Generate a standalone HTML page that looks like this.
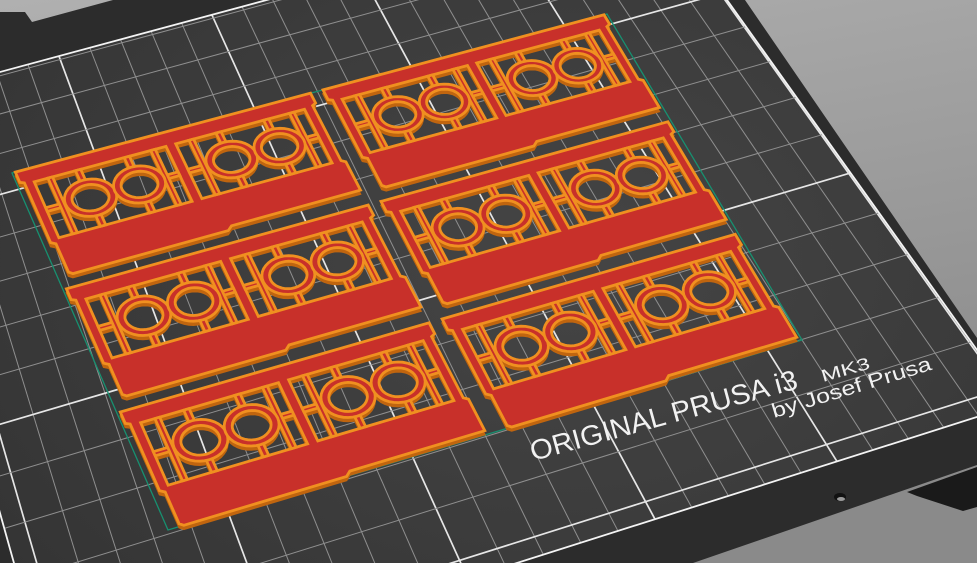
<!DOCTYPE html>
<html><head><meta charset="utf-8"><style>
html,body{margin:0;padding:0;width:977px;height:563px;overflow:hidden;background:#8d8d8d}
svg{display:block}
</style></head><body>
<svg id="s" width="977" height="563" viewBox="0 0 977 563" xmlns="http://www.w3.org/2000/svg">
<defs>
<linearGradient id="bg" x1="0" y1="0" x2="0.3" y2="1"><stop offset="0" stop-color="#b0b0b0"/><stop offset="1" stop-color="#8a8a8a"/></linearGradient>
<radialGradient id="bed" cx="0.6" cy="0.45" r="0.7"><stop offset="0" stop-color="#454545"/><stop offset="1" stop-color="#323232"/></radialGradient>
</defs>
<rect width="977" height="563" fill="url(#bg)"/>
<polygon points="0,12 25,12 32,22 113,0 745,0 977,338 977,465 693,563 0,563" fill="#2c2c2c"/>
<g id="bedg"></g>
<g id="parts"></g>
<polygon points="907,492 977,467 977,507 963,511 917,496" fill="#1a1a1a"/>
<ellipse cx="840" cy="497" rx="6" ry="4" fill="#111"/>
<ellipse cx="841" cy="499" rx="4" ry="2" fill="#9a9a9a"/>
<g fill="#f2f2f2" font-family="Liberation Sans, sans-serif">
<text transform="translate(533,461) rotate(-15.3)" font-size="28" textLength="276" lengthAdjust="spacingAndGlyphs">ORIGINAL PRUSA i3</text>
<text transform="translate(823,382) rotate(-16)" font-size="17" textLength="50" lengthAdjust="spacingAndGlyphs">MK3</text>
<text transform="translate(774,418) rotate(-17)" font-size="20" textLength="166" lengthAdjust="spacingAndGlyphs">by Josef Prusa</text>
</g>
</svg>
<script>
(function(){
var NS="http://www.w3.org/2000/svg";
function solveH(src,dst){var A=[],B=[];for(var i=0;i<4;i++){var x=src[i][0],y=src[i][1],X=dst[i][0],Y=dst[i][1];
A.push([x,y,1,0,0,0,-x*X,-y*X]);B.push(X);A.push([0,0,0,x,y,1,-x*Y,-y*Y]);B.push(Y);}
var n=8;for(var i=0;i<n;i++){var p=i;for(var r=i+1;r<n;r++)if(Math.abs(A[r][i])>Math.abs(A[p][i]))p=r;
var t=A[i];A[i]=A[p];A[p]=t;t=B[i];B[i]=B[p];B[p]=t;
for(var r=0;r<n;r++){if(r===i)continue;var f=A[r][i]/A[i][i];for(var c=i;c<n;c++)A[r][c]-=f*A[i][c];B[r]-=f*B[i];}}
var h=B.map(function(b,i){return b/A[i][i];});return [[h[0],h[1],h[2]],[h[3],h[4],h[5]],[h[6],h[7],1]];}
function ap(M,x,y){var w=M[2][0]*x+M[2][1]*y+M[2][2];return[(M[0][0]*x+M[0][1]*y+M[0][2])/w,(M[1][0]*x+M[1][1]*y+M[1][2])/w];}
function inv3(m){var a=m[0][0],b=m[0][1],c=m[0][2],d=m[1][0],e=m[1][1],f=m[1][2],g=m[2][0],h=m[2][1],i=m[2][2];
var A=e*i-f*h,B=-(d*i-f*g),C=d*h-e*g,det=a*A+b*B+c*C;
return [[A/det,-(b*i-c*h)/det,(b*f-c*e)/det],[B/det,(a*i-c*g)/det,-(a*f-c*d)/det],[C/det,-(a*h-b*g)/det,(a*e-b*d)/det]];}
function isect(p1,p2,p3,p4){var x1=p1[0],y1=p1[1],x2=p2[0],y2=p2[1],x3=p3[0],y3=p3[1],x4=p4[0],y4=p4[1];
var d=(x1-x2)*(y3-y4)-(y1-y2)*(x3-x4);var t=((x1-x3)*(y3-y4)-(y1-y3)*(x3-x4))/d;return[x1+t*(x2-x1),y1+t*(y2-y1)];}
function el(tag,at,par){var e=document.createElementNS(NS,tag);for(var k in at)e.setAttribute(k,at[k]);par.appendChild(e);return e;}
function pts(a){return a.map(function(p){return p[0].toFixed(1)+","+p[1].toFixed(1);}).join(" ");}
var Lb=[[0,72],[200,18]],Lr=[[727,0],[977,350]],Lf=[[810,470],[977,417]],Ll=[[0,513],[14,563]];
var BL=isect(Lb[0],Lb[1],Ll[0],Ll[1]),BR=isect(Lb[0],Lb[1],Lr[0],Lr[1]),FR=isect(Lf[0],Lf[1],Lr[0],Lr[1]),FL=isect(Lf[0],Lf[1],Ll[0],Ll[1]);
var W=250,D=210;
var H=solveH([[0,0],[W,0],[W,D],[0,D]],[BL,BR,FR,FL]),Hi=inv3(H);
var g=document.getElementById("bedg");
el("polygon",{points:pts([BL,BR,FR,FL]),fill:"url(#bed)"},g);
function FY(x){return 470+(x-810)*(417-470)/(977-810);}
var a=ap(Hi,655,FY(655)),b=ap(Hi,837,FY(837));var cell=(b[0]-a[0])/5;var cellY=cell*1.6;
var c=ap(Hi,977,397);
var gm=el("g",{},g);
for(var k=-80;k<=80;k++){var xm=b[0]+k*cell;if(xm<=0.3||xm>=W-0.3)continue;var p=ap(H,xm,0),q=ap(H,xm,D);var mj=(k%5===0);
el("line",{x1:p[0],y1:p[1],x2:q[0],y2:q[1],stroke:mj?"#e6e6e6":"#8f8f8f","stroke-width":mj?1.7:1},gm);}
for(var k=-80;k<=80;k++){var ym=c[1]-k*cellY;if(ym<=0.3||ym>=D-0.3)continue;var p=ap(H,0,ym),q=ap(H,W,ym);var mj=(k%5===0);
el("line",{x1:p[0],y1:p[1],x2:q[0],y2:q[1],stroke:mj?"#e6e6e6":"#8f8f8f","stroke-width":mj?1.7:1},gm);}
el("polygon",{points:pts([BL,BR,FR,FL]),fill:"none",stroke:"#f4f4f4","stroke-width":1.8},g);
var GW=190,GH=145;
var H2=solveH([[0,0],[GW,0],[GW,GH],[0,GH]],[[12,173],[607,14],[802,340],[168,530]]);
var P=document.getElementById("parts");
el("polygon",{points:pts([[0,0],[GW,0],[GW,GH],[0,GH]].map(function(p){return ap(H2,p[0],p[1]);})),fill:"none",stroke:"#179070","stroke-width":1.3},P);
function proj(list,ox,oy,dy){return list.map(function(p){var r=ap(H2,ox+p[0],oy+p[1]);return[r[0],r[1]+(dy||0)];});}
function dpath(polys,ox,oy,dy){return polys.map(function(pl){var q=proj(pl,ox,oy,dy);return "M"+q.map(function(p){return p[0].toFixed(1)+" "+p[1].toFixed(1);}).join("L")+"Z";}).join("");}
function rect(x0,y0,x1,y1){return[[x0,y0],[x1,y0],[x1,y1],[x0,y1]];}
function circ(cx,cy,r){var a=[];for(var i=0;i<36;i++){var t=i/36*Math.PI*2;a.push([cx+r*Math.cos(t),cy+r*Math.sin(t)]);}return a;}
var outer=[[0,0],[92,0],[92,4.5],[90.8,5.2],[90.8,30],[92,31],[92,43.5],[52,43.5],[50.5,45],[3.5,45],[2.5,44],[2.5,32],[1.2,31],[1.2,5.2],[0,4.5]];
var holes=[rect(4,5.8,44.5,30),rect(47.5,5.8,88,30)];
var comps=[];
comps.push([outer].concat(holes));
[4,47.5].forEach(function(px){
 var pw=40.5,cy=17.9,r=7.6,c1=px+pw*0.33,c2=px+pw*0.7;
 var s=0.8;
 comps.push([rect(c1-s,5.8,c1+s,cy-r+0.3)]);comps.push([rect(c1-s,cy+r-0.3,c1+s,30)]);
 comps.push([rect(c2-s,5.8,c2+s,cy-r+0.3)]);comps.push([rect(c2-s,cy+r-0.3,c2+s,30)]);
 comps.push([rect(px,cy-s,c1-r+0.3,cy+s)]);comps.push([rect(c2+r-0.3,cy-s,px+pw,cy+s)]);
 comps.push([rect(px+pw*0.12-0.7,5.8,px+pw*0.12+0.7,30)]);comps.push([rect(px+pw*0.9-0.7,5.8,px+pw*0.9+0.7,30)]);
 comps.push([circ(c1,cy,r),circ(c1,cy,r-2.2)]);
 comps.push([circ(c2,cy,r),circ(c2,cy,r-2.2)]);
});
var origins=[];
[[1,0],[97,0]].forEach(function(cx){[0,50,100].forEach(function(ry){origins.push([cx[0],ry]);});});
origins.sort(function(p,q){return p[1]-q[1];});
origins.forEach(function(o){
 var gp=el("g",{},P);
 comps.forEach(function(cp){el("path",{d:dpath(cp,o[0],o[1],4),fill:"#c0650f","fill-rule":"evenodd",stroke:"#c0650f","stroke-width":1.5},gp);});
 comps.forEach(function(cp){el("path",{d:dpath(cp,o[0],o[1],0),fill:"#c8302a","fill-rule":"evenodd",stroke:"#f09020","stroke-width":2.8},gp);});
});
})();
</script>
</body></html>
